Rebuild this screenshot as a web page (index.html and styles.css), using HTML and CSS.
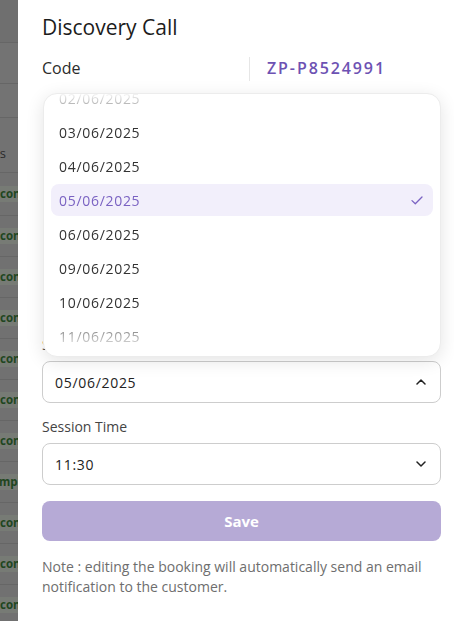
FILE: index.html
```html
<!DOCTYPE html>
<html lang="en">
<head>
<meta charset="utf-8">
<title>Discovery Call</title>
<link rel="stylesheet" href="styles.css">
</head>
<body>
<div class="page">
  <div class="bg-table">
    <div class="bg-row r-top"></div>
    <div class="bg-row r-2"></div>
    <div class="bg-row r-3"></div>
    <div class="bg-row r-head"><span class="head-text">Status</span></div>
    <div class="bg-row r-data first"><span class="chip">confirmed</span></div>
    <div class="bg-row r-data"><span class="chip">confirmed</span></div>
    <div class="bg-row r-data"><span class="chip">confirmed</span></div>
    <div class="bg-row r-data"><span class="chip">confirmed</span></div>
    <div class="bg-row r-data"><span class="chip">confirmed</span></div>
    <div class="bg-row r-data"><span class="chip">confirmed</span></div>
    <div class="bg-row r-data"><span class="chip">confirmed</span></div>
    <div class="bg-row r-data"><span class="chip shift">completed</span></div>
    <div class="bg-row r-data"><span class="chip">confirmed</span></div>
    <div class="bg-row r-data"><span class="chip">confirmed</span></div>
    <div class="bg-row r-data"><span class="chip">confirmed</span></div>
  </div>

  <aside class="drawer">
    <h1 class="title">Discovery Call</h1>

    <div class="info-row">
      <div class="info-label">Code</div>
      <div class="info-value code">ZP-P8524991</div>
    </div>

    <div class="info-row hidden-row">
      <div class="info-label"></div>
      <div class="info-value"></div>
    </div>

    <div class="field date-field">
      <label class="field-label">Session Date</label>
      <div class="select-wrap">
        <div class="menu">
          <div class="menu-scroll">
            <ul class="menu-list">
              <li class="menu-item">02/06/2025</li>
              <li class="menu-item">03/06/2025</li>
              <li class="menu-item">04/06/2025</li>
              <li class="menu-item selected">05/06/2025
                <svg class="check" width="12" height="9" viewBox="0 0 12 9"><path d="M1 4.6 L4.3 7.8 L11 1" fill="none" stroke="currentColor" stroke-width="1.3" stroke-linecap="round" stroke-linejoin="round"/></svg>
              </li>
              <li class="menu-item">06/06/2025</li>
              <li class="menu-item">09/06/2025</li>
              <li class="menu-item">10/06/2025</li>
              <li class="menu-item">11/06/2025</li>
              <li class="menu-item">12/06/2025</li>
            </ul>
          </div>
        </div>
        <div class="select">
          <span class="value">05/06/2025</span>
          <svg class="chev" width="10" height="6" viewBox="0 0 10 6"><path d="M1 5 L5 1 L9 5" fill="none" stroke="currentColor" stroke-width="1.5" stroke-linecap="round" stroke-linejoin="round"/></svg>
        </div>
      </div>
    </div>

    <div class="field">
      <label class="field-label">Session Time</label>
      <div class="select">
        <span class="value">11:30</span>
        <svg class="chev" width="10" height="6" viewBox="0 0 10 6"><path d="M1 1 L5 5 L9 1" fill="none" stroke="currentColor" stroke-width="1.5" stroke-linecap="round" stroke-linejoin="round"/></svg>
      </div>
    </div>

    <button class="save" type="button">Save</button>

    <p class="note">Note : editing the booking will automatically send an email notification to the customer.</p>
  </aside>
</div>
</body>
</html>
```

FILE: styles.css
```css
* { box-sizing: border-box; }

html, body {
  margin: 0;
  padding: 0;
  width: 454px;
  height: 621px;
  overflow: hidden;
  font-family: "Open Sans", "Noto Sans", sans-serif;
}

.page {
  position: relative;
  width: 454px;
  height: 621px;
  background: #727272;
  overflow: hidden;
}

/* dimmed table behind the drawer */
.bg-table {
  display: flex;
  flex-direction: column;
  width: 18px;
  overflow: hidden;
}

.bg-row {
  flex: none;
  display: flex;
  align-items: center;
  border-bottom: 1px solid #666;
  white-space: nowrap;
}

.r-top { height: 43px; background: #6f6f6f; }
.r-2 { height: 41px; background: #737373; }
.r-3 { height: 34px; background: #737373; }
.r-head {
  height: 54px;
  justify-content: flex-end;
  width: 6px;
  align-items: flex-end;
  padding-bottom: 10px;
  border-bottom: none;
}
.r-head + .r-data { border-top: 1px solid #666; }

.head-text {
  font-size: 13px;
  color: #2a2a2a;
}

.r-data { height: 41px; background: #717171; }
.r-data.first { height: 44px; }

.chip {
  display: block;
  width: 18px;
  line-height: 16px;
  font-size: 11.5px;
  font-weight: 700;
  color: #1f461f;
  background: #777b75;
  overflow: hidden;
}
.chip.shift { text-indent: -14px; }

/* drawer */
.drawer {
  position: absolute;
  top: 0;
  left: 18px;
  right: 0;
  bottom: 0;
  background: #fff;
  padding: 14px 13px 0 24px;
  display: flex;
  flex-direction: column;
  color: #222;
}

.title {
  margin: 0;
  font-size: 21px;
  line-height: 26px;
  font-weight: 500;
  color: #1c1c1c;
}

.info-row {
  display: flex;
  align-items: center;
  height: 24px;
  margin-top: 17px;
  font-size: 16px;
}

.info-label {
  width: 208px;
  height: 24px;
  display: flex;
  align-items: center;
  border-right: 1px solid #e6e6e6;
  color: #2b2b2b;
  padding-bottom: 2px;
}

.info-value { padding-left: 17px; padding-bottom: 2px; }

.code {
  color: #6d52b3;
  font-weight: 600;
  letter-spacing: 1.9px;
}

.hidden-row { margin-top: 60px; }

.field {
  display: flex;
  flex-direction: column;
  gap: 7px;
}

.date-field { margin-top: 171px; }
.date-field + .field { margin-top: 15px; }

.field-label {
  font-size: 14px;
  line-height: 18px;
  color: #444;
}

.select-wrap { position: relative; }

.select {
  height: 42px;
  border: 1px solid #cdcdcd;
  border-radius: 8px;
  display: flex;
  align-items: center;
  justify-content: space-between;
  padding: 0 14px 0 12px;
  font-size: 14px;
  color: #222;
}

.value,
.menu-item {
  letter-spacing: 0.7px;
}

.chev { color: #222; }

/* dropdown popover */
.menu {
  position: absolute;
  left: 1px;
  right: 0;
  bottom: calc(100% + 4px);
  height: 264px;
  background: #fff;
  border: 1px solid #ececec;
  border-radius: 14px;
  box-shadow: 0 4px 18px rgba(0, 0, 0, 0.11);
  overflow: hidden;
  z-index: 2;
}

.menu-scroll {
  height: 100%;
  overflow: hidden;
  -webkit-mask-image: linear-gradient(to bottom, rgba(0,0,0,0.05) 0, #000 32px, #000 calc(100% - 42px), rgba(0,0,0,0.1) calc(100% - 8px));
  mask-image: linear-gradient(to bottom, rgba(0,0,0,0.05) 0, #000 32px, #000 calc(100% - 42px), rgba(0,0,0,0.1) calc(100% - 8px));
}

.menu-list {
  list-style: none;
  margin: -20px 0 0;
  padding: 8px 7px;
  display: flex;
  flex-direction: column;
  gap: 2px;
}

.menu-item {
  height: 32px;
  display: flex;
  align-items: center;
  justify-content: space-between;
  padding: 0 10px 0 8px;
  border-radius: 8px;
  font-size: 14px;
  color: #333;
}

.menu-item.selected {
  background: #f2effb;
  color: #7a62c2;
}

.check { color: #7a62c2; }

.save {
  margin-top: 16px;
  height: 40px;
  border: none;
  border-radius: 8px;
  background: #b6aad6;
  color: #fff;
  font-family: inherit;
  font-size: 15px;
  font-weight: 700;
}

.note {
  margin: 16px 0 0;
  font-size: 14px;
  line-height: 20px;
  color: #6e6e6e;
}
```
